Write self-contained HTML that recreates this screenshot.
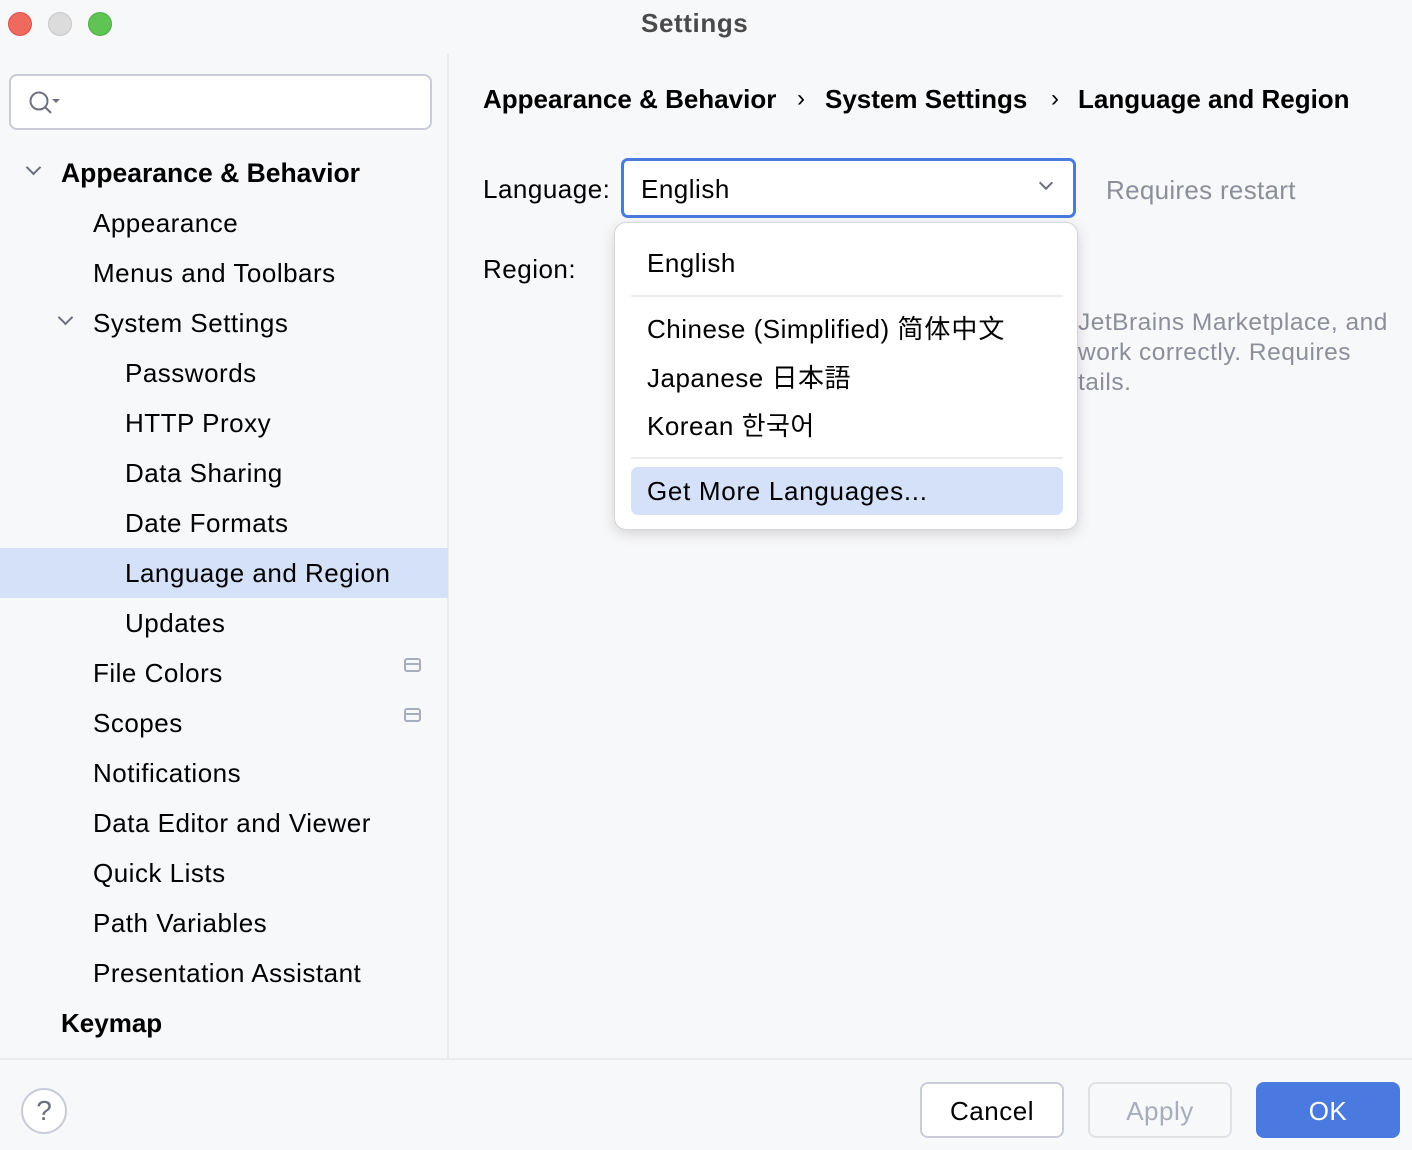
<!DOCTYPE html>
<html><head><meta charset="utf-8"><style>
*{margin:0;padding:0;box-sizing:border-box}
body{width:1412px;height:1150px;background:#f7f8fa;font-family:"Liberation Sans","Noto Sans CJK SC",sans-serif;color:#000;position:relative;overflow:hidden;font-size:26px;letter-spacing:.5px}
b{letter-spacing:0}
.abs{position:absolute}
.dot{position:absolute;top:12px;width:24px;height:24px;border-radius:50%}
.side{position:absolute;left:0;top:54px;width:449px;height:1005px;border-right:2px solid #ebecf0}
.row{position:absolute;left:0;width:448px;height:50px;line-height:50px;white-space:nowrap}
.sel{background:#d5e1f9}
.chev{position:absolute;width:11px;height:11px;border-right:2px solid #6c707e;border-bottom:2px solid #6c707e;transform:rotate(45deg)}
.btn{position:absolute;top:1082px;height:56px;border-radius:8px;text-align:center;line-height:54px;font-size:26px}
.fi{position:absolute;left:404px;width:17px;height:14px;border:2px solid #a8adbd;border-radius:3px}
.fi:after{content:"";position:absolute;left:0;right:0;top:3px;border-top:2px solid #a8adbd}
</style></head><body>
<div class="dot" style="left:8px;background:#ee6a5f;border:1px solid #d8544a"></div>
<div class="dot" style="left:48px;background:#dcdcdc;border:1px solid #c8c8c8"></div>
<div class="dot" style="left:88px;background:#5fc454;border:1px solid #4fae45"></div>
<div class="abs" style="left:641px;top:8px;font-size:26px;letter-spacing:.6px;font-weight:bold;color:#4a4a4a;line-height:30px">Settings</div>

<div class="side">
<div class="abs" style="left:9px;top:20px;width:423px;height:56px;background:#fff;border:2px solid #c9ccd6;border-radius:8px">
<svg class="abs" style="left:16px;top:12px" width="40" height="30"><circle cx="12" cy="13" r="8.5" fill="none" stroke="#6c707e" stroke-width="2"/><line x1="18" y1="19" x2="24" y2="25" stroke="#6c707e" stroke-width="2"/><path d="M25 11h8l-4 4z" fill="#6c707e"/></svg>
</div>
</div>
<div class="row" style="top:148px"><div class="chev" style="left:28px;top:14px"></div><b style="position:absolute;left:61px;font-size:26.5px">Appearance &amp; Behavior</b></div>
<div class="row" style="top:198px"><span class="abs" style="left:93px">Appearance</span></div>
<div class="row" style="top:248px"><span class="abs" style="left:93px">Menus and Toolbars</span></div>
<div class="row" style="top:298px"><div class="chev" style="left:60px;top:14px"></div><span class="abs" style="left:93px">System Settings</span></div>
<div class="row" style="top:348px"><span class="abs" style="left:125px">Passwords</span></div>
<div class="row" style="top:398px"><span class="abs" style="left:125px">HTTP Proxy</span></div>
<div class="row" style="top:448px"><span class="abs" style="left:125px">Data Sharing</span></div>
<div class="row" style="top:498px"><span class="abs" style="left:125px">Date Formats</span></div>
<div class="row sel" style="top:548px"><span class="abs" style="left:125px">Language and Region</span></div>
<div class="row" style="top:598px"><span class="abs" style="left:125px">Updates</span></div>
<div class="row" style="top:648px"><span class="abs" style="left:93px">File Colors</span></div>
<div class="row" style="top:698px"><span class="abs" style="left:93px">Scopes</span></div>
<div class="row" style="top:748px"><span class="abs" style="left:93px">Notifications</span></div>
<div class="row" style="top:798px"><span class="abs" style="left:93px">Data Editor and Viewer</span></div>
<div class="row" style="top:848px"><span class="abs" style="left:93px">Quick Lists</span></div>
<div class="row" style="top:898px"><span class="abs" style="left:93px">Path Variables</span></div>
<div class="row" style="top:948px"><span class="abs" style="left:93px">Presentation Assistant</span></div>
<div class="row" style="top:998px"><b class="abs" style="left:61px">Keymap</b></div>
<div class="fi" style="top:658px"></div>
<div class="fi" style="top:708px"></div>

<div class="abs" style="left:483px;top:82px;font-weight:bold;font-size:26px;line-height:34px;white-space:nowrap;letter-spacing:0">Appearance &amp; Behavior</div>
<div class="abs" style="left:797px;top:82px;font-size:24px;line-height:34px">›</div>
<div class="abs" style="left:825px;top:82px;font-weight:bold;font-size:26px;line-height:34px;white-space:nowrap;letter-spacing:0">System Settings</div>
<div class="abs" style="left:1051px;top:82px;font-size:24px;line-height:34px">›</div>
<div class="abs" style="left:1078px;top:82px;font-weight:bold;font-size:26px;line-height:34px;white-space:nowrap;letter-spacing:0">Language and Region</div>

<div class="abs" style="left:483px;top:172px;line-height:34px">Language:</div>
<div class="abs" style="left:621px;top:158px;width:455px;height:60px;border:3px solid #4a7ae0;border-radius:7px;background:#fff">
<span class="abs" style="left:17px;top:11px;line-height:34px">English</span>
<div class="chev" style="left:417px;top:17px;border-color:#6c707e;width:10px;height:10px"></div>
</div>
<div class="abs" style="left:1106px;top:173px;line-height:34px;color:#8c8f99;letter-spacing:.3px">Requires restart</div>
<div class="abs" style="left:483px;top:252px;line-height:34px">Region:</div>
<div class="abs" style="left:1078px;top:308px;line-height:30px;color:#8c8f99;font-size:24.5px;white-space:nowrap">JetBrains Marketplace, and<br>work correctly. Requires<br>tails.</div>

<div class="abs" style="left:614px;top:222px;width:464px;height:308px;background:#fff;border:1px solid #d3d5db;border-radius:12px;box-shadow:0 4px 14px rgba(0,0,0,.15)">
<div class="abs" style="left:32px;top:23px;line-height:34px">English</div>
<div class="abs" style="left:16px;top:72px;width:432px;border-top:2px solid #ebecf0"></div>
<div class="abs" style="left:32px;top:89px;line-height:34px;white-space:nowrap">Chinese (Simplified) <span style="letter-spacing:1px">简体中文</span></div>
<div class="abs" style="left:32px;top:137px;line-height:34px;white-space:nowrap">Japanese <span style="font-family:'Noto Sans CJK JP',sans-serif">日本語</span></div>
<div class="abs" style="left:32px;top:185px;line-height:34px;white-space:nowrap">Korean <span style="font-family:'Noto Sans CJK KR',sans-serif">한국어</span></div>
<div class="abs" style="left:16px;top:234px;width:432px;border-top:2px solid #ebecf0"></div>
<div class="abs" style="left:16px;top:244px;width:432px;height:48px;background:#d5e1f9;border-radius:7px"></div>
<div class="abs" style="left:32px;top:251px;line-height:34px;white-space:nowrap;letter-spacing:.7px">Get More Languages...</div>
</div>

<div class="abs" style="left:0;top:1058px;width:1412px;border-top:2px solid #ebecf0"></div>
<div class="abs" style="left:21px;top:1088px;width:46px;height:46px;border-radius:50%;border:2px solid #c9ccd6;background:#fff;text-align:center;line-height:42px;font-size:28px;color:#6c707e;letter-spacing:0">?</div>
<div class="btn" style="left:920px;width:144px;border:2px solid #c9ccd6;background:#fff">Cancel</div>
<div class="btn" style="left:1088px;width:144px;border:2px solid #dfe1e5;color:#a8adbd">Apply</div>
<div class="btn" style="left:1256px;width:144px;background:#4a7ae0;color:#fff;line-height:58px">OK</div>
</body></html>
